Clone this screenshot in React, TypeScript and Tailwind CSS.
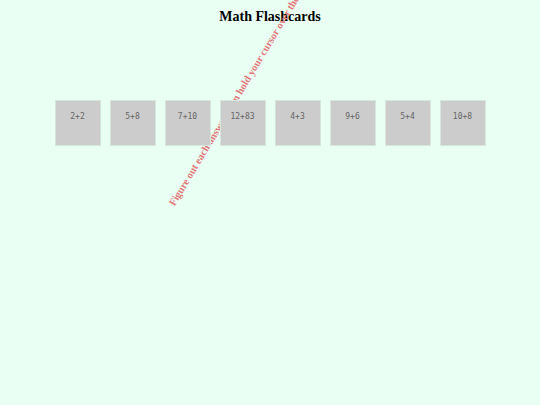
import React from "react";

const cards = ["2+2", "5+8", "7+10", "12+83", "4+3", "9+6", "5+4", "10+8"];

export default function App() {
  return (
    <div className="relative w-[540px] h-[405px] overflow-hidden bg-[#e9fff4]">
      <h1 className="pt-[8px] text-center font-['Liberation_Serif',serif] text-[14px] font-bold leading-[17px] text-black">
        Math Flashcards
      </h1>

      {/* diagonal hint running behind the cards */}
      <div className="absolute left-[172px] top-[199px] origin-left -rotate-[59deg] whitespace-nowrap font-['Liberation_Serif',serif] text-[10.4px] font-bold leading-[12px] text-[#e27676]">
        Figure out each answer, then hold your cursor over the card to see if you were right.
      </div>

      <div className="relative z-10 mt-[75px] flex justify-center gap-[9px]">
        {cards.map((c) => (
          <div
            key={c}
            className="h-[46px] w-[46px] border border-[#d6e6dc] bg-[#cccccc] pt-[11px] text-center font-['DejaVu_Sans_Mono',monospace] text-[8px] leading-[10px] text-[#666666]"
          >
            {c}
          </div>
        ))}
      </div>
    </div>
  );
}
